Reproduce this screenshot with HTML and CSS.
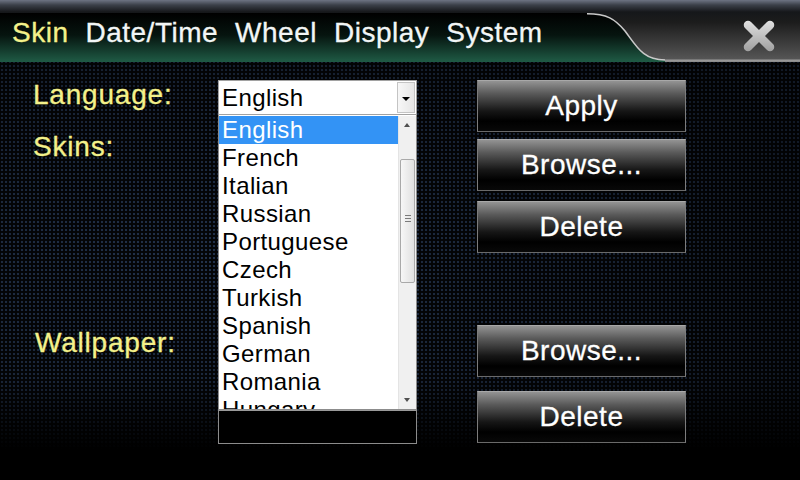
FILE: index.html
```html
<!DOCTYPE html>
<html lang="en">
<head>
  <meta charset="UTF-8">
  <title>Settings - Skin</title>
  <link rel="stylesheet" href="styles.css">
</head>
<body>
  <div class="header">
    <div class="tabs">
      <span class="tab active">Skin</span>
      <span class="tab">Date/Time</span>
      <span class="tab">Wheel</span>
      <span class="tab">Display</span>
      <span class="tab">System</span>
    </div>
    <svg class="tab-curve" width="78" height="49" viewBox="0 0 78 49">
      <defs>
        <linearGradient id="tabGreen" x1="0" y1="0" x2="0" y2="49" gradientUnits="userSpaceOnUse">
          <stop offset="0" stop-color="#000"/>
          <stop offset="0.45" stop-color="#06140f"/>
          <stop offset="1" stop-color="#1f5b45"/>
        </linearGradient>
      </defs>
      <path d="M0 0 C20 0 28 6 38 18 C50 34 56 47 78 47 L78 49 L0 49 Z" fill="url(#tabGreen)"/>
      <path d="M0 0.8 C20 0.8 28 6 38 18 C50 34 56 47 78 47" fill="none" stroke="#c9c9c9" stroke-width="1.6"/>
    </svg>
    <div class="header-right">
      <svg class="close" width="34" height="34" viewBox="0 0 34 34">
        <defs>
          <linearGradient id="xGrey" x1="0" y1="0" x2="0" y2="34" gradientUnits="userSpaceOnUse">
            <stop offset="0" stop-color="#e4e4e4"/>
            <stop offset="1" stop-color="#9c9c9c"/>
          </linearGradient>
        </defs>
        <path d="M6 6 L28 28 M28 6 L6 28" stroke="url(#xGrey)" stroke-width="8.5" stroke-linecap="round"/>
      </svg>
    </div>
  </div>

  <div class="main">
    <div class="labels">
      <div class="label">Language:</div>
      <div class="label skins">Skins:</div>
      <div class="label wallpaper">Wallpaper:</div>
    </div>

    <div class="picker">
      <div class="select">
        <span class="select-value">English</span>
        <span class="select-arrow"></span>
      </div>
      <div class="list">
        <ul class="options">
          <li class="selected">English</li>
          <li>French</li>
          <li>Italian</li>
          <li>Russian</li>
          <li>Portuguese</li>
          <li>Czech</li>
          <li>Turkish</li>
          <li>Spanish</li>
          <li>German</li>
          <li>Romania</li>
          <li>Hungary</li>
        </ul>
        <div class="scrollbar">
          <span class="scroll-btn up"></span>
          <span class="thumb"></span>
          <span class="scroll-btn down"></span>
        </div>
      </div>
      <div class="preview"></div>
    </div>

    <div class="actions">
      <button class="btn">Apply</button>
      <button class="btn skin-browse">Browse...</button>
      <button class="btn skin-delete">Delete</button>
      <button class="btn wall-browse">Browse...</button>
      <button class="btn wall-delete">Delete</button>
    </div>
  </div>
</body>
</html>
```

FILE: styles.css
```css
:root {
  --label-yellow: #f4f18a;
  --tab-white: #f2f6f6;
  --list-border: #8c8c8c;
  --highlight: #3393f5;
}

body {
  margin: 0;
  width: 800px;
  height: 480px;
  overflow: hidden;
  font-family: "Liberation Sans", Arial, sans-serif;
  background:
    linear-gradient(to bottom, rgba(0, 0, 0, 0) 0, rgba(0, 0, 0, 0) 380px, #000 450px),
    radial-gradient(ellipse at 25% 55%, rgba(0, 0, 0, 0) 0, rgba(0, 0, 0, 0.5) 75%),
    radial-gradient(circle, #22324c 0, #22324c 1px, rgba(0, 0, 0, 0) 1.6px) 0 0 / 4px 4px,
    #040507;
}

/* header / tab strip */
.header {
  display: flex;
  height: 62px;
  background: linear-gradient(to bottom, #6d7483 0, #3b4049 5px, #15171a 12px, #1c1c1c 22px, #555 59px, #9c9c9c 60px, #8a8a8a 62px);
}

.tabs {
  flex: 0 0 587px;
  margin-top: 13px;
  height: 49px;
  box-sizing: border-box;
  padding: 3px 0 0 12px;
  display: flex;
  gap: 17px;
  background: linear-gradient(to bottom, #000 0, #06140f 45%, #1f5b45 100%);
}

.tab {
  font-size: 28px;
  line-height: 34px;
  letter-spacing: 0.5px;
  color: var(--tab-white);
  -webkit-text-stroke: 0.3px currentColor;
}

.tab.active {
  color: var(--label-yellow);
}

.tab-curve {
  display: block;
  margin-top: 13px;
}

.header-right {
  flex: 1;
  display: flex;
  justify-content: flex-end;
  padding: 19px 24px 0 0;
}

.close {
  display: block;
}

/* content */
.main {
  display: flex;
  padding: 18px 0 0 33px;
}

.labels {
  width: 185px;
}

.label {
  font-size: 28px;
  line-height: 30px;
  letter-spacing: 0.8px;
  color: var(--label-yellow);
  -webkit-text-stroke: 0.3px currentColor;
}

.label.skins {
  margin-top: 22px;
}

.label.wallpaper {
  margin-top: 166px;
  padding-left: 2px;
}

.picker {
  width: 199px;
  margin-right: 60px;
}

.select {
  display: flex;
  height: 35px;
  box-sizing: border-box;
  border: 1px solid #a2a2a2;
  background: #fff;
}

.select-value {
  flex: 1;
  padding-left: 3px;
  font-size: 24px;
  line-height: 33px;
  letter-spacing: 0.4px;
  color: #000;
}

.select-arrow {
  width: 16px;
  margin: 1px;
  border: 1px solid #c4c4c4;
  background: linear-gradient(to right, #f7f7f7, #e6e6e6);
  position: relative;
}

.select-arrow::after {
  content: "";
  position: absolute;
  left: 4px;
  top: 14px;
  border-left: 4px solid transparent;
  border-right: 4px solid transparent;
  border-top: 4px solid #000;
}

.list {
  display: flex;
  height: 295px;
  box-sizing: border-box;
  border: 1px solid var(--list-border);
  border-top: none;
  padding-top: 1px;
  background: #fff;
  overflow: hidden;
}

.options {
  flex: 1;
  margin: 0;
  padding: 0;
  list-style: none;
  overflow: hidden;
}

.options li {
  height: 28px;
  padding-left: 3px;
  font-size: 24px;
  line-height: 28px;
  letter-spacing: 0.4px;
  color: #000;
  white-space: nowrap;
}

.options li.selected {
  background: var(--highlight);
  color: #fff;
}

.scrollbar {
  width: 17px;
  display: flex;
  flex-direction: column;
  background: #f0f0f0;
  border-left: 1px solid #e4e4e4;
}

.scroll-btn {
  height: 20px;
  position: relative;
}

.scroll-btn::after {
  content: "";
  position: absolute;
  left: 5px;
  border-left: 3.5px solid transparent;
  border-right: 3.5px solid transparent;
}

.scroll-btn.up::after {
  top: 7px;
  border-bottom: 4px solid #505050;
}

.scroll-btn.down {
  margin-top: auto;
  height: 17px;
}

.scroll-btn.down::after {
  top: 6px;
  border-top: 4px solid #505050;
}

.thumb {
  height: 122px;
  margin: 23px 1px 0 1px;
  border: 1px solid #a9a9a9;
  border-radius: 2px;
  background: linear-gradient(to right, #f7f7f7, #e0e0e0);
  position: relative;
}

.thumb::after {
  content: "";
  position: absolute;
  left: 4px;
  top: 55px;
  width: 6px;
  height: 7px;
  background: repeating-linear-gradient(to bottom, #7a7a7a 0, #7a7a7a 1px, transparent 1px, transparent 3px);
}

.preview {
  height: 34px;
  box-sizing: border-box;
  border: 1px solid var(--list-border);
  border-top-color: #9a9a9a;
  background: #000;
}

/* buttons on the right */
.actions {
  width: 209px;
  display: flex;
  flex-direction: column;
}

.btn {
  display: block;
  width: 209px;
  height: 52px;
  padding: 0;
  border: 1px solid #7c7c7c;
  border-top-color: #a8a8a8;
  border-bottom-color: #6a6a6a;
  background: linear-gradient(to bottom, #939393 0, #5a5a5a 25%, #161616 60%, #000 80%, #080808 100%);
  color: #fff;
  font-family: inherit;
  font-size: 28px;
  line-height: 50px;
  letter-spacing: 0.5px;
  text-align: center;
  -webkit-text-stroke: 0.3px currentColor;
  cursor: pointer;
}

.btn.skin-browse {
  margin-top: 7px;
}

.btn.skin-delete {
  margin-top: 10px;
}

.btn.wall-browse {
  margin-top: 72px;
}

.btn.wall-delete {
  margin-top: 14px;
}
```
